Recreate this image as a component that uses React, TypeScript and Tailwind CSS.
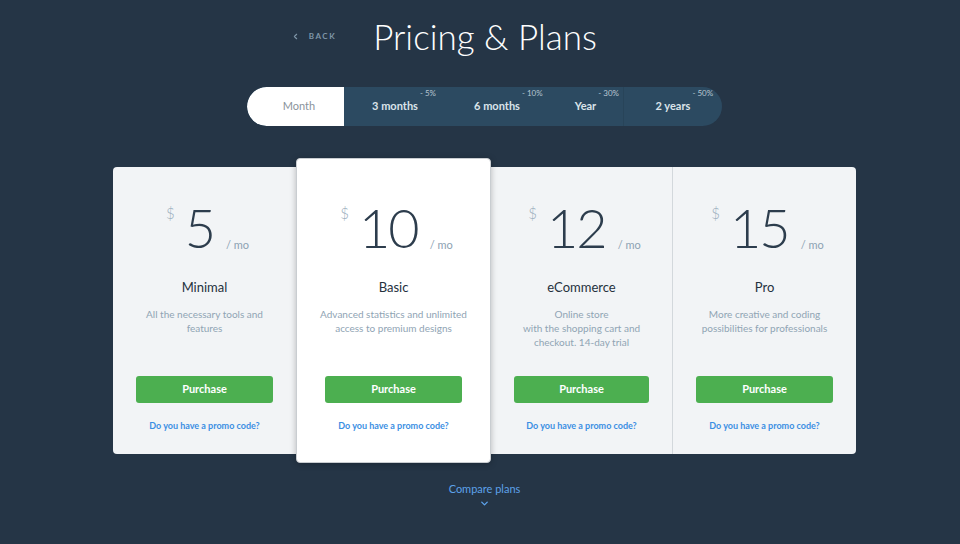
import { ChevronLeft, ChevronDown } from "lucide-react"

interface Plan {
  price: number
  name: string
  desc: string[]
}

const plans: Plan[] = [
  { price: 5, name: "Minimal", desc: ["All the necessary tools and", "features"] },
  { price: 10, name: "Basic", desc: ["Advanced statistics and unlimited", "access to premium designs"] },
  { price: 12, name: "eCommerce", desc: ["Online store", "with the shopping cart and", "checkout. 14-day trial"] },
  { price: 15, name: "Pro", desc: ["More creative and coding", "possibilities for professionals"] },
]

const tabs = [
  { label: "3 months", off: "- 5%", w: "w-[102px]" },
  { label: "6 months", off: "- 10%", w: "w-[102px]" },
  { label: "Year", off: "- 30%", w: "w-[75px]" },
  { label: "2 years", off: "- 50%", w: "w-[99px]" },
]

function PlanBody({ plan, featured }: { plan: Plan; featured?: boolean }) {
  return (
    <div className={`flex flex-col items-center ${featured ? "pt-[42px] px-[28px]" : "pt-[34px] px-[23px]"}`}>
      <div className="flex items-start h-[56px] pl-[6px]">
        <span className="text-[15px] text-[#9aaebd] mt-[1px] mr-[10px] font-light">$</span>
        <span className="text-[54px] leading-[54px] font-light text-[#2d3d4d] tracking-[-2px]">{plan.price}</span>
        <span className="text-[11px] text-[#8da2b3] mt-[36px] ml-[12px]">/ mo</span>
      </div>
      <div className="mt-[21px] text-[13px] text-[#25313d]">{plan.name}</div>
      <div className="mt-[9px] h-[69px] text-[10px] leading-[14px] text-[#90a4b4] text-center whitespace-nowrap">
        {plan.desc.map((d) => (
          <div key={d}>{d}</div>
        ))}
      </div>
      <button className="w-full h-[27px] rounded-[3px] bg-[#4caf50] text-white text-[11px] font-bold">
        Purchase
      </button>
      <a className="mt-[16px] text-[9px] font-bold text-[#3b8fe3]">Do you have a promo code?</a>
    </div>
  )
}

export default function App() {
  return (
    <div className="w-[960px] h-[544px] bg-[#253546] font-['Lato',sans-serif] flex flex-col items-center overflow-hidden">
      <div className="w-full grid grid-cols-[1fr_auto_1fr] items-center pt-[13px]">
        <div className="flex justify-end items-center pr-[27px] text-[#7f95a8] text-[8px] font-bold tracking-[1.5px]">
          <ChevronLeft className="w-[9px] h-[9px] mr-[9px]" strokeWidth={3} />
          BACK
        </div>
        <h1 className="ml-[10px] text-[35px] leading-[46px] font-light text-white">Pricing &amp; Plans</h1>
        <div />
      </div>

      <div className="mt-[28px] ml-[9px] flex h-[39px] rounded-full overflow-hidden bg-[#2c4a61]">
        <div className="w-[97px] bg-white flex items-center justify-center text-[11px] text-[#8a939b] rounded-l-full pl-[7px]">
          Month
        </div>
        {tabs.map((t, i) => (
          <div
            key={t.label}
            className={`${t.w} flex items-center justify-center text-[11px] font-bold text-[#dbe4ea] ${i === 3 ? "border-l border-[#284459]" : ""}`}
          >
            <span className="relative">
              {t.label}
              <span className="absolute left-full -top-[11px] ml-[2px] whitespace-nowrap text-[8px] font-normal text-[#b8c7d2]">
                {t.off}
              </span>
            </span>
          </div>
        ))}
      </div>

      <div className="mt-[32px] ml-[9px] flex items-center">
        <div className="w-[183px] h-[287px] bg-[#f2f4f6] rounded-l-[4px]">
          <PlanBody plan={plans[0]} />
        </div>
        <div className="w-[195px] h-[305px] bg-white rounded-[4px] border border-[#c9cdd1] shadow-[0_1px_6px_rgba(0,0,0,0.25)] z-10">
          <PlanBody plan={plans[1]} featured />
        </div>
        <div className="w-[182px] h-[287px] bg-[#f2f4f6] border-r border-[#d3d8dc]">
          <PlanBody plan={plans[2]} />
        </div>
        <div className="w-[183px] h-[287px] bg-[#f2f4f6] rounded-r-[4px]">
          <PlanBody plan={plans[3]} />
        </div>
      </div>

      <div className="mt-[18px] ml-[9px] flex flex-col items-center text-[#5da2ea]">
        <span className="text-[11px]">Compare plans</span>
        <ChevronDown className="w-[11px] h-[11px]" strokeWidth={3} />
      </div>
    </div>
  )
}
